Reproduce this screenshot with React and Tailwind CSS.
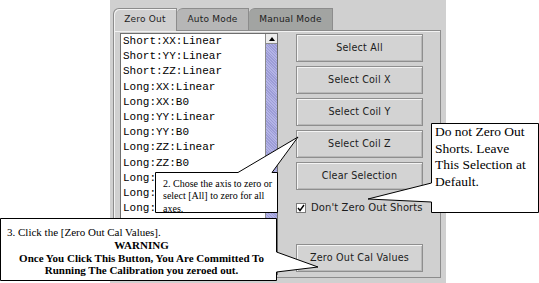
export default function App() {
  const items = [
    "Short:XX:Linear",
    "Short:YY:Linear",
    "Short:ZZ:Linear",
    "Long:XX:Linear",
    "Long:XX:B0",
    "Long:YY:Linear",
    "Long:YY:B0",
    "Long:ZZ:Linear",
    "Long:ZZ:B0",
    "Long:XY:Linear",
    "Long:XZ:Linear",
    "Long:YZ:Linear",
    "Long:ZX:Linear",
  ];
  const buttons = ["Select All", "Select Coil X", "Select Coil Y", "Select Coil Z", "Clear Selection"];
  const sans = "font-['DejaVu_Sans',sans-serif]";
  const btn =
    "h-[28px] w-[127px] shrink-0 flex items-center justify-center border border-[#8e8e8e] bg-[#d3d3d3] shadow-[inset_1px_1px_0_#f4f4f4,inset_-1px_-1px_0_#b8b8b8] text-[9.6px] text-[#1c1c1c] tracking-[0.2px]";
  return (
    <div className="relative w-[539px] h-[283px] bg-white overflow-hidden">
      {/* window panel */}
      <div className={`ml-[110px] w-[336px] h-[283px] bg-[#d0d0d0] pt-[8px] pl-[3px] ${sans}`}>
        {/* tabs */}
        <div className="flex items-start h-[22px] text-[9px] text-[#1e1e1e] tracking-[0.2px]">
          <div className="relative z-10 w-[64px] h-[23px] bg-[#d0d0d0] border border-b-0 border-[#8c8c8c] rounded-tl-[6px] shadow-[inset_1px_1px_0_#f2f2f2] flex items-center justify-center pb-[1px]">
            Zero Out
          </div>
          <div className="w-[72px] h-[22px] bg-[#b6b6b6] border border-l-0 border-b-0 border-[#8c8c8c] rounded-tl-[6px] flex items-center justify-center">
            Auto Mode
          </div>
          <div className="w-[84px] h-[22px] bg-[#a2a4a2] border border-l-0 border-b-0 border-[#8c8c8c] rounded-tl-[6px] flex items-center justify-center">
            Manual Mode
          </div>
        </div>
        {/* tab content */}
        <div className="w-[328px] h-[248px] border border-[#8c8c8c] shadow-[inset_1px_1px_0_#f2f2f2] flex items-start pl-[6px] pt-[2px]">
          {/* list */}
          <div className="w-[158px] h-[242px] flex border border-[#6e6e6e] bg-white">
            <div className="flex-1 overflow-hidden pl-[2px] font-['Liberation_Mono',monospace] text-[11px] leading-[15.2px] text-black">
              {items.map((t) => (
                <div key={t} className="whitespace-nowrap">{t}</div>
              ))}
            </div>
            <div className="w-[12px] flex flex-col border-l border-[#8c8c8c]">
              <div className="h-[10px] bg-[#ececec] border-b border-[#8c8c8c] flex items-center justify-center">
                <div className="w-0 h-0 border-l-[3px] border-r-[3px] border-b-[4px] border-l-transparent border-r-transparent border-b-black"></div>
              </div>
              <div className="flex-1 bg-[repeating-linear-gradient(45deg,#9c9cd6_0px,#9c9cd6_1px,#b4b4e6_1px,#b4b4e6_2px)]"></div>
            </div>
          </div>
          {/* buttons */}
          <div className="ml-[18px] pt-[1px] flex flex-col">
            {buttons.map((b, i) => (
              <div key={b} className={`${btn} ${i > 0 ? "mt-[4px]" : ""}`}>{b}</div>
            ))}
            <div className="mt-[11px] h-[14px] flex items-center gap-[5px] text-[10px] leading-[14px] text-[#1c1c1c] tracking-[0.1px]">
              <div className="w-[10px] h-[10px] bg-white border border-[#7a7a7a] flex items-center justify-center">
                <svg width="8" height="8" viewBox="0 0 8 8">
                  <path d="M1 4 L3 6.5 L7 1" stroke="#000" strokeWidth="1.4" fill="none" />
                </svg>
              </div>
              <span>Don't Zero Out Shorts</span>
            </div>
            <div className={`mt-[29px] ${btn}`}>Zero Out Cal Values</div>
          </div>
        </div>
      </div>

      {/* callout shapes */}
      <svg className="absolute left-0 top-0 pointer-events-none" width="539" height="283" viewBox="0 0 539 283">
        <path
          d="M431.5 123.5 L538.5 123.5 L538.5 212.5 L431.5 212.5 L431.5 202 L368 199 L431.5 183 Z"
          fill="#fff"
          stroke="#000"
          strokeWidth="1"
        />
        <path
          d="M155.5 172.5 L238 172.5 L298 137 L272 172.5 L277.5 172.5 L277.5 212.5 L155.5 212.5 Z"
          fill="#fff"
          stroke="#000"
          strokeWidth="1"
        />
        <path
          d="M0.5 218.5 L276.5 218.5 L276.5 252 L318 267 L276.5 272 L276.5 280.5 L0.5 280.5 Z"
          fill="#fff"
          stroke="#000"
          strokeWidth="1"
        />
      </svg>

      {/* callout texts */}
      <div className="absolute left-[435px] top-[124px] font-['Liberation_Serif',serif] text-[13.5px] leading-[16.7px] text-black">
        <div>Do not Zero Out</div>
        <div>Shorts. Leave</div>
        <div>This Selection at</div>
        <div>Default.</div>
      </div>
      <div className="absolute left-[163px] top-[178px] font-['Liberation_Serif',serif] text-[10px] leading-[12.3px] text-black whitespace-nowrap">
        <div>2. Chose the axis to zero or</div>
        <div>select [All] to zero for all</div>
        <div>axes.</div>
      </div>
      <div className="absolute left-[7px] top-[226px] w-[269px] font-['Liberation_Serif',serif] text-[11px] leading-[12.8px] text-black whitespace-nowrap">
        <div>3. Click the [Zero Out Cal Values].</div>
        <div className="text-center font-bold">WARNING</div>
        <div className="text-center font-bold">Once You Click This Button, You Are Committed To</div>
        <div className="text-center font-bold">Running The Calibration you zeroed out.</div>
      </div>
    </div>
  );
}
